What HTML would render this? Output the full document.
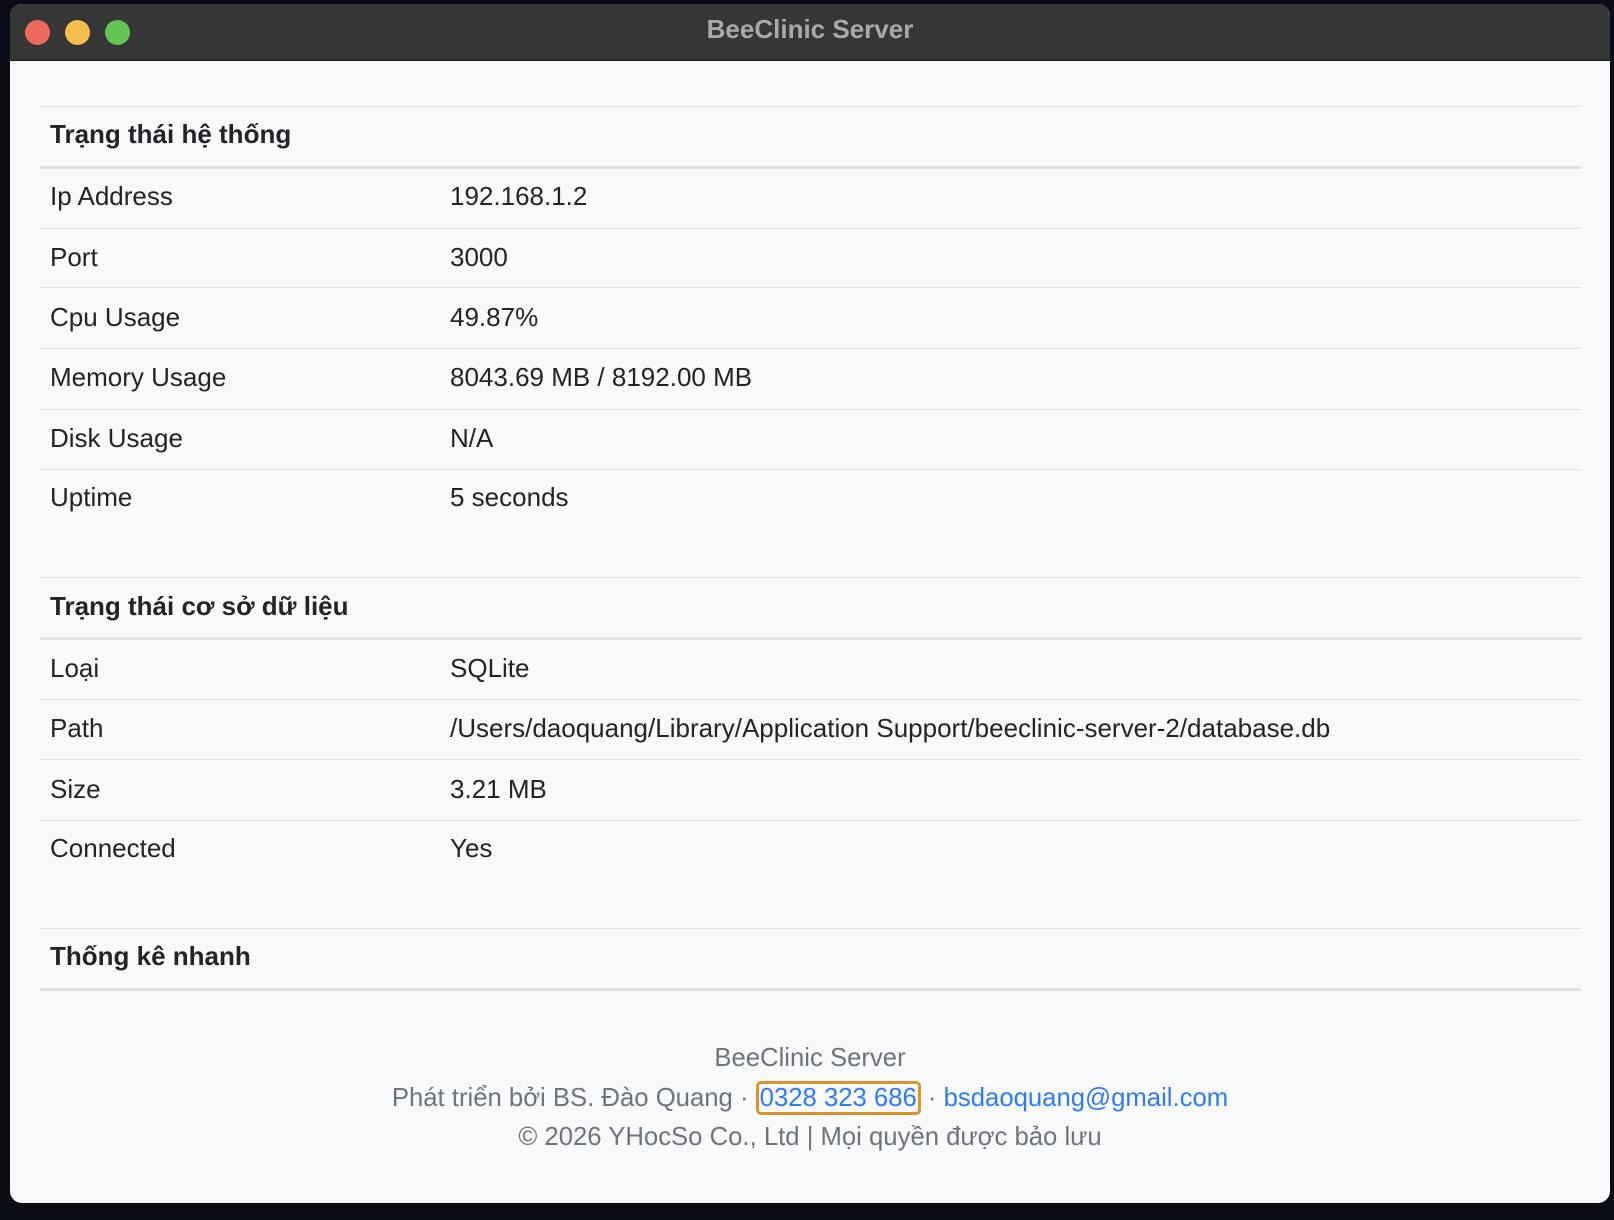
<!DOCTYPE html>
<html><head><meta charset="utf-8"><style>
*{margin:0;padding:0;box-sizing:border-box}
body{width:1614px;height:1220px;background:#0a0d16;font-family:"Liberation Sans",Arial,sans-serif;position:relative;overflow:hidden}
.win{position:absolute;left:10px;top:4px;width:1600px;height:1199px;border-radius:12px;background:#f8f9fa;overflow:hidden}
.tb{position:absolute;left:0;top:0;width:100%;height:57px;background:#363636;border-bottom:1px solid #111}
.dot{position:absolute;top:16px;width:25px;height:25px;border-radius:50%}
.title{position:absolute;left:0;width:100%;top:10px;text-align:center;color:#a9a9a9;font-weight:bold;font-size:26px}
.ln{position:absolute;left:30px;width:1541px;height:1px;background:#dee2e6}
.th{position:absolute;left:30px;width:1541px;height:3px;background:#dee2e6}
.t{position:absolute;font-size:26px;color:#212529;line-height:30px;white-space:nowrap}
.h{font-weight:bold}
.f{position:absolute;left:0;width:100%;text-align:center;font-size:25.7px;color:#6c757d;line-height:30px}
a{color:#2f7bf5;text-decoration:none}
.box{border:3px solid #d9962f;border-radius:5px;padding:0 1px}
</style></head><body>
<div class="win">
<div class="tb">
<div class="dot" style="left:15px;background:#ee6a5e"></div>
<div class="dot" style="left:55px;background:#f5bf4f"></div>
<div class="dot" style="left:95px;background:#61c454"></div>
<div class="title">BeeClinic Server</div>
</div>
<div class="ln" style="top:102px"></div>
<div class="t h" style="left:40px;top:115px">Trạng thái hệ thống</div>
<div class="th" style="top:162px"></div>
<div class="t" style="left:40px;top:177px">Ip Address</div><div class="t" style="left:440px;top:177px">192.168.1.2</div>
<div class="ln" style="top:224px"></div>
<div class="t" style="left:40px;top:238px">Port</div><div class="t" style="left:440px;top:238px">3000</div>
<div class="ln" style="top:283px"></div>
<div class="t" style="left:40px;top:298px">Cpu Usage</div><div class="t" style="left:440px;top:298px">49.87%</div>
<div class="ln" style="top:344px"></div>
<div class="t" style="left:40px;top:358px">Memory Usage</div><div class="t" style="left:440px;top:358px">8043.69 MB / 8192.00 MB</div>
<div class="ln" style="top:405px"></div>
<div class="t" style="left:40px;top:419px">Disk Usage</div><div class="t" style="left:440px;top:419px">N/A</div>
<div class="ln" style="top:465px"></div>
<div class="t" style="left:40px;top:478px">Uptime</div><div class="t" style="left:440px;top:478px">5 seconds</div>

<div class="ln" style="top:573px"></div>
<div class="t h" style="left:40px;top:587px">Trạng thái cơ sở dữ liệu</div>
<div class="th" style="top:633px"></div>
<div class="t" style="left:40px;top:649px">Loại</div><div class="t" style="left:440px;top:649px">SQLite</div>
<div class="ln" style="top:695px"></div>
<div class="t" style="left:40px;top:709px">Path</div><div class="t" style="left:440px;top:709px">/Users/daoquang/Library/Application Support/beeclinic-server-2/database.db</div>
<div class="ln" style="top:755px"></div>
<div class="t" style="left:40px;top:770px">Size</div><div class="t" style="left:440px;top:770px">3.21 MB</div>
<div class="ln" style="top:816px"></div>
<div class="t" style="left:40px;top:829px">Connected</div><div class="t" style="left:440px;top:829px">Yes</div>

<div class="ln" style="top:924px"></div>
<div class="t h" style="left:40px;top:937px">Thống kê nhanh</div>
<div class="th" style="top:984px"></div>

<div class="f" style="top:1039px">BeeClinic Server</div>
<div class="f" style="top:1079px">Phát triển bởi BS. Đào Quang · <a class="box">0328 323 686</a> · <a>bsdaoquang@gmail.com</a></div>
<div class="f" style="top:1118px">© 2026 YHocSo Co., Ltd | Mọi quyền được bảo lưu</div>
</div>
</body></html>
